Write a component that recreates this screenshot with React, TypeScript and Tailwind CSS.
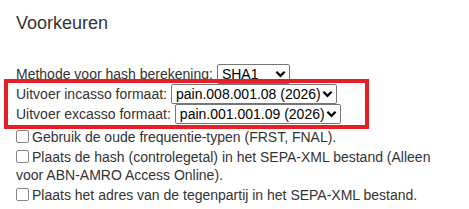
import React from "react";

const formats = {
    incasso: ["pain.008.001.08 (2026)", "pain.008.001.02 (2009)"],
    excasso: ["pain.001.001.09 (2026)", "pain.001.001.03 (2009)"],
};

const checkboxes = [
    "Gebruik de oude frequentie-typen (FRST, FNAL).",
    "Plaats de hash (controlegetal) in het SEPA-XML bestand (Alleen voor ABN-AMRO Access Online).",
    "Plaats het adres van de tegenpartij in het SEPA-XML bestand.",
];

function Chevron() {
    return (
        <svg
            viewBox="0 0 12 8"
            className="pointer-events-none absolute right-[4px] top-[6px] w-[11px] h-[8px]"
        >
            <path d="M1.5 1.5 L6 6 L10.5 1.5" fill="none" stroke="#000" strokeWidth="2.4" />
        </svg>
    );
}

function Select({ options, width }: { options: string[]; width: string }) {
    return (
        <span className="relative inline-block">
            <select
                className={`appearance-none h-[20px] ${width} border border-[#767676] rounded-[2px] bg-white text-black pl-[4px] pr-[14px] leading-[18px] text-[14px]`}
                defaultValue={options[0]}
            >
                {options.map((o) => (
                    <option key={o}>{o}</option>
                ))}
            </select>
            <Chevron />
        </span>
    );
}

export default function App() {
    return (
        <div className="relative min-h-screen bg-white font-['Liberation_Sans',Arial,sans-serif] text-[#333333] text-[14px] pl-[16px] pr-[16px] pt-[13px]">
            <h2 className="text-[18px] leading-[20px]">Voorkeuren</h2>

            <div className="mt-[31px]">
                <div className="h-[20px] flex items-center">
                    <span className="mr-[4px]">Methode voor hash berekening:</span>
                    <Select options={["SHA1", "SHA256"]} width="w-[73px]" />
                </div>
                <div className="h-[20px] flex items-center">
                    <span className="mr-[4px]">Uitvoer incasso formaat:</span>
                    <Select options={formats.incasso} width="w-[166px]" />
                </div>
                <div className="h-[20px] flex items-center">
                    <span className="mr-[4px]">Uitvoer excasso formaat:</span>
                    <Select options={formats.excasso} width="w-[166px]" />
                </div>
            </div>

            <div className="mt-[4px] flex flex-col gap-[2px]">
                {checkboxes.map((label) => (
                    <label key={label} className="block leading-[18px]">
                        <input
                            type="checkbox"
                            className="appearance-none inline-block w-[13px] h-[13px] border border-[#858585] rounded-[2px] bg-white mr-[3px] align-[-1px]"
                        />
                        {label}
                    </label>
                ))}
            </div>

            {/* annotation box */}
            <div className="pointer-events-none absolute left-[4px] top-[79px] w-[365px] h-[50px] border-[4px] border-[#e61e25]" />
        </div>
    );
}
